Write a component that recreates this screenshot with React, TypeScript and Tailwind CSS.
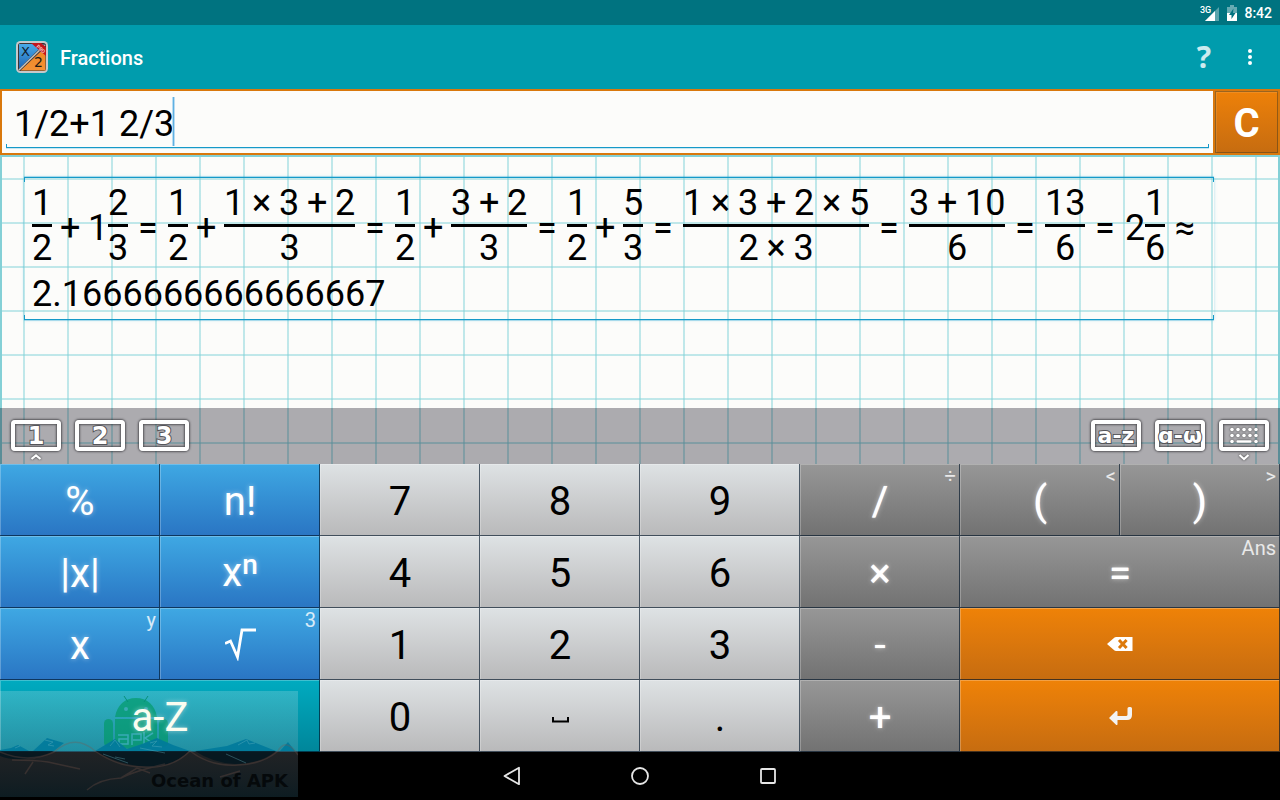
import type { ReactNode } from 'react';

const TONES = {
  blue: 'bg-linear-to-b from-[#3fa8e3] to-[#2a75c3] text-white [text-shadow:0_0_5px_rgba(255,255,255,0.5)]',
  light: 'bg-linear-to-b from-[#dee2e4] to-[#b9b9ba] text-black',
  gray: 'bg-linear-to-b from-[#979797] to-[#727272] text-white [text-shadow:0_0_1px_#fff,0_0_5px_rgba(255,255,255,0.5)]',
  orange: 'bg-linear-to-b from-[#ef8207] to-[#c66c10] text-white',
  teal: 'bg-linear-to-b from-[#00abc0] to-[#00869a] text-[#fbfdf0] [text-shadow:0_0_5px_rgba(255,255,255,0.5)]',
};

type KeyDef = {
  name: string;
  tone: keyof typeof TONES;
  label: ReactNode;
  corner?: string;
  wide?: boolean;
};

const BackspaceIcon = () => (
  <svg width="26" height="14" viewBox="0 0 26 14" aria-hidden="true">
    <path d="M0 7 7.500.4Q8 0 9 0H25.500V14H9Q8 14 7.500 13.600Z" fill="#fff" />
    <path d="m12 3 7.600 8M19.600 3 12 11" stroke="#dd790a" strokeWidth="3" />
  </svg>
);

const EnterIcon = () => (
  <svg width="23" height="18" viewBox="0 0 23 18" aria-hidden="true">
    <path d="M0 11 7 4Q8.500 3.500 8.500 5V9H17Q18.500 9 18.500 7.500V1.500Q18.500 0 20 0H21.500Q23 0 23 1.500V8Q23 13 18 13H8.500V17Q8.500 18.500 7 17.800Z" fill="#f3f3f3" />
  </svg>
);

const SpaceIcon = () => (
  <svg className="mt-2" width="17" height="6" viewBox="0 0 17 6" aria-hidden="true">
    <path d="M1 0V4.500H16V0" fill="none" stroke="#000" strokeWidth="2" />
  </svg>
);

const RootIcon = () => (
  <svg width="31" height="33" viewBox="0 0 31 33" aria-hidden="true">
    <path d="M0 15.500 5.500 13 12.500 29 17 2H31" fill="none" stroke="#fff" strokeWidth="2.800" />
  </svg>
);

const KEYS: KeyDef[] = [
  { name: 'percent', tone: 'blue', label: '%' },
  { name: 'factorial', tone: 'blue', label: 'n!' },
  { name: '7', tone: 'light', label: '7' },
  { name: '8', tone: 'light', label: '8' },
  { name: '9', tone: 'light', label: '9' },
  { name: 'divide', tone: 'gray', label: '/', corner: '÷' },
  { name: 'open parenthesis', tone: 'gray', label: '(', corner: '<' },
  { name: 'close parenthesis', tone: 'gray', label: ')', corner: '>' },
  { name: 'absolute value', tone: 'blue', label: '|x|' },
  {
    name: 'power',
    tone: 'blue',
    label: (
      <>
        x<sup className="-top-3 text-[28px] font-medium">n</sup>
      </>
    ),
  },
  { name: '4', tone: 'light', label: '4' },
  { name: '5', tone: 'light', label: '5' },
  { name: '6', tone: 'light', label: '6' },
  { name: 'multiply', tone: 'gray', label: '×' },
  { name: 'equals', tone: 'gray', label: '=', corner: 'Ans', wide: true },
  { name: 'x', tone: 'blue', label: 'x', corner: 'y' },
  { name: 'square root', tone: 'blue', label: <RootIcon />, corner: '3' },
  { name: '1', tone: 'light', label: '1' },
  { name: '2', tone: 'light', label: '2' },
  { name: '3', tone: 'light', label: '3' },
  { name: 'minus', tone: 'gray', label: '-' },
  { name: 'backspace', tone: 'orange', label: <BackspaceIcon />, wide: true },
  { name: 'letters', tone: 'teal', label: 'a-Z', wide: true },
  { name: '0', tone: 'light', label: '0' },
  { name: 'space', tone: 'light', label: <SpaceIcon /> },
  { name: 'decimal point', tone: 'light', label: '.' },
  { name: 'plus', tone: 'gray', label: '+' },
  { name: 'enter', tone: 'orange', label: <EnterIcon />, wide: true },
];

function Key({ name, tone, label, corner, wide }: KeyDef) {
  return (
    <button
      type="button"
      aria-label={name}
      className={`relative flex h-[72px] items-center justify-center text-[40px] leading-[47px] shadow-[inset_-1px_-1px_0_rgba(0,20,40,0.65),inset_1px_1px_0_rgba(255,255,255,0.25)] ${TONES[tone]} ${wide ? 'col-span-2' : ''}`}
    >
      <span className={`relative z-10 whitespace-nowrap ${typeof label === 'string' ? 'pt-[3px]' : ''}`}>{label}</span>
      {corner && (
        <span className="absolute top-0 right-1 text-xl leading-6 text-white/80 [text-shadow:none]">{corner}</span>
      )}
    </button>
  );
}

/** Splits "1 × 3 + 2" into tokens and sets digits and operators in evenly spaced slots. */
function Terms({ text }: { text: string }) {
  return (
    <span className="flex justify-center gap-2">
      {text.split(' ').map((t, i) => (
        <span key={i} className={`text-center ${t.length > 1 ? 'w-10' : t === '×' ? 'w-[19px]' : 'w-5'}`}>
          {t}
        </span>
      ))}
    </span>
  );
}

function Frac({ top, bottom, whole }: { top: string; bottom: string; whole?: string }) {
  return (
    <span className="flex items-center">
      {whole && <span className="w-5 pt-1">{whole}</span>}
      <span className="flex flex-col">
        <Terms text={top} />
        <span className="h-[3px] bg-black" />
        <Terms text={bottom} />
      </span>
    </span>
  );
}

const Op = ({ children }: { children: string }) => (
  <span className={`pt-1 text-center ${children === '+' ? 'w-5' : 'w-6'}`}>{children}</span>
);

const TAB = 'relative flex h-[31px] w-[50px] items-center justify-center rounded-[4px] border-4 border-white shadow-[0_0_2px_1px_rgba(40,40,45,0.65),inset_0_0_2px_1px_rgba(40,40,45,0.65)]';
const TAB_TEXT = "font-['DejaVu_Sans','Noto_Sans',sans-serif] leading-6 font-bold whitespace-nowrap text-white [-webkit-text-stroke:2px_#55555a] [paint-order:stroke_fill]";

function Chevron({ down }: { down?: boolean }) {
  return (
    <svg className="absolute top-[29px] left-[15px] drop-shadow-[0_0_1px_#333]" width="12" height="8" viewBox="0 0 12 8" aria-hidden="true">
      <path d={down ? 'M1.500 2 6 6 10.500 2' : 'M1.500 6 6 2.500 10.500 6'} fill="none" stroke="#fff" strokeWidth="2.200" />
    </svg>
  );
}

function Watermark() {
  return (
    <div className="pointer-events-none absolute bottom-[3px] left-0 h-[106px] w-[298px] bg-linear-to-b from-[rgba(235,240,240,0.2)] via-[rgba(190,190,200,0.19)] to-[rgba(70,150,180,0.19)]">
      <svg className="absolute inset-0" width="298" height="106" viewBox="0 0 298 106" aria-hidden="true">
        <g fill="#009a64" opacity="0.65">
          <path d="M115 26C117 14 125 7 136 7S155 14 157 26Z" />
          <rect x="104" y="28" width="9" height="28" rx="4.500" />
          <rect x="159" y="28" width="9" height="28" rx="4.500" />
          <path d="M115 28H157V54L135 60 115 54Z" />
        </g>
        <path d="m124 5 4 6M148 5l-4 6" stroke="#06917a" />
        <circle cx="126" cy="18" r="2" fill="#38abb5" />
        <circle cx="146" cy="18" r="2" fill="#38abb5" />
        <path d="M118 44H128V53H119V48H128M132 54V43H141V49H133M144 41V53M153 42 145 47 154 53" fill="none" stroke="#38abb5" strokeWidth="1.500" />
        <g fill="#007a9c" opacity="0.9">
          <path d="M0 59 11 57 18 54 29 60H0Z" />
          <path d="M33 60 47 47 64 52 54 60Z" />
          <path d="M95 60 115 48 127 58 142 53 157 47 173 54 190 60Z" />
          <path d="M195 60 227 55 246 48 276 60Z" />
          <path d="M280 60 288 51 295 60Z" />
        </g>
        <g fill="#00151f" opacity="0.75">
          <path d="M0 60H54Q42 67 25 68 10 69 0 65Z" />
          <path d="M95 60H189Q173 76 147 76 119 74 95 60Z" />
          <path d="M195 60H276Q260 73 235 73 213 72 195 60Z" />
        </g>
        <g fill="none" stroke="#6fbac7" opacity="0.35">
          <path d="m45 49 8 2-5 3 6 1M15 57l5-2M150 52l7-2-5 5 10 1M238 54l9-5 2 4 6-1M110 55l5-6 5 7" />
          <path d="m103 63 25 9M115 66l10 2M140 57l25 5M226 63l20 9" />
        </g>
        <g fill="none" stroke="#7c564b" strokeWidth="1.500" opacity="0.3">
          <path d="M0 61Q28 73 54 61 75 42 95 60 119 77 147 76 173 77 190 60 211 76 238 74 263 73 278 60 286 46 298 64" />
          <path d="M12 69Q35 69 48 71L80 78M33 71 25 83M87 99Q99 88 121 87 135 80 165 73M121 87l16-10 13 5M220 86l20-6" />
        </g>
      </svg>
      <span className="absolute right-[10px] bottom-1 font-['DejaVu_Sans',sans-serif] text-[18px] leading-6 font-bold text-[#05090b]">Ocean of APK</span>
    </div>
  );
}

export default function App() {
  return (
    <div className="relative flex min-h-screen flex-col bg-black font-['Roboto','Liberation_Sans',sans-serif]">
      <div className="flex h-[25px] items-center justify-end bg-[#007380] pt-px pr-2 text-white">
        <svg width="19" height="18" viewBox="0 0 19 18" aria-hidden="true">
          <path d="M19 3V17H5Z" fill="#fff" opacity="0.35" />
          <path d="M15 7V17H5Z" fill="#fff" />
          <text x="0" y="9" fill="#fff" fontSize="9" fontWeight="500">3G</text>
        </svg>
        <svg className="ml-2" width="10" height="16" viewBox="0 0 10 16" aria-hidden="true">
          <path d="M3 0H7V2H10V16H0V2H3Z" fill="#fff" opacity="0.4" />
          <path d="M0 8H10V16H0Z" fill="#fff" />
          <path d="M6.500 3.500 2 10H4.500V14L8.500 8H6Z" fill="#007380" />
        </svg>
        <time className="ml-[7px] text-[14px] leading-5 font-medium">8:42</time>
      </div>

      <header className="flex h-16 items-center bg-[#009cad] pl-4">
        <svg width="32" height="32" viewBox="0 0 32 32" aria-hidden="true">
          <defs>
            <linearGradient id="tileBlue" x2="0" y2="1">
              <stop stopColor="#49aae8" />
              <stop offset="1" stopColor="#1f66b5" />
            </linearGradient>
            <linearGradient id="tileOrange" x2="0" y2="1">
              <stop stopColor="#ee8420" />
              <stop offset="1" stopColor="#f39236" />
            </linearGradient>
          </defs>
          <rect width="32" height="32" rx="4.500" fill="#c6c9cc" />
          <rect x="2" y="2" width="28" height="28" rx="2.500" fill="#3d3434" />
          <path d="M3 3H28L3 28Z" fill="url(#tileBlue)" />
          <path d="M29.500 6V29.500H4.500Z" fill="url(#tileOrange)" />
          <path d="M3 29 29 4" stroke="#c9c3bb" strokeWidth="1.500" />
          <path d="M15 2H25L30 6V15Z" fill="#c3141c" />
          <text x="5" y="15" fontSize="13" fill="#10202e" fontFamily="DejaVu Sans">X</text>
          <text x="18" y="26" fontSize="14" fill="#221a14" fontFamily="DejaVu Sans">2</text>
          <text x="20" y="6" fontSize="5" fontWeight="700" fill="#f3c4c4" transform="rotate(42 20 6)">PRO</text>
        </svg>
        <h1 className="ml-3 pt-0.5 text-xl leading-6 font-medium text-white">Fractions</h1>
        <button type="button" aria-label="Help" className="ml-auto flex h-12 w-12 items-center justify-center font-['Noto_Sans',sans-serif] text-[30px] leading-10 font-bold text-white/80">
          ?
        </button>
        <button type="button" aria-label="More options" className="mr-[14px] ml-[6px] flex h-12 w-8 items-center justify-center">
          <svg width="4" height="16" viewBox="0 0 4 16" aria-hidden="true" fill="#fff">
            <circle cx="2" cy="2" r="2" />
            <circle cx="2" cy="8" r="2" />
            <circle cx="2" cy="14" r="2" />
          </svg>
        </button>
      </header>

      <div className="flex h-[66px] border-2 border-[#d9780c] bg-[#d9780c]">
        <div className="relative flex flex-1 bg-[#fcfcfa] px-1">
          <input
            type="text"
            aria-label="Expression"
            defaultValue="1/2+1 2/3"
            className="w-full bg-transparent pt-1 pl-2 text-[36px] leading-[42px] text-black outline-none"
          />
          <span className="absolute top-[6px] left-[170px] h-[49px] w-[3px] border-x border-[#b9dcf2] bg-[#5fb1e2]" />
          <span className="absolute inset-x-1 bottom-[5px] h-1 border-x border-b border-[#1599c8] shadow-[0_1px_0_#c8e6f1]" />
        </div>
        <button
          type="button"
          aria-label="Clear"
          className="ml-[2px] w-[63px] bg-linear-to-b from-[#ee8108] to-[#c66c10] pt-0.5 text-[40px] leading-[47px] font-bold text-white shadow-[inset_0_0_0_1px_rgba(70,60,30,0.5),inset_1px_1px_0_1px_rgba(255,255,255,0.1)]"
        >
          C
        </button>
      </div>

      <main className="flex flex-1 flex-col bg-[#fcfcfa] bg-[linear-gradient(rgba(130,210,216,0.5)_2px,transparent_2px),linear-gradient(90deg,rgba(130,210,216,0.5)_2px,transparent_2px)] bg-[length:44px_44px] bg-[position:23px_23px] shadow-[inset_2px_2px_0_#84d0d6,inset_-2px_0_0_#84d0d6]">
        <output className="relative mt-[22px] mr-[66px] ml-6 block border-y border-[#1599c8] pt-1 pb-1 pl-2 text-[36px] leading-[42px] text-black shadow-[0_0_3px_rgba(40,170,215,0.35),0_-1px_0_rgba(40,170,215,0.3),0_1px_0_rgba(40,170,215,0.3)] before:absolute before:inset-x-0 before:top-0 before:h-1 before:border-x before:border-[#1599c8] after:absolute after:inset-x-0 after:bottom-0 after:h-1 after:border-x after:border-[#1599c8]">
          <span className="flex items-center gap-2">
            <Frac top="1" bottom="2" />
            <Op>+</Op>
            <Frac whole="1" top="2" bottom="3" />
            <Op>=</Op>
            <Frac top="1" bottom="2" />
            <Op>+</Op>
            <Frac top="1 × 3 + 2" bottom="3" />
            <Op>=</Op>
            <Frac top="1" bottom="2" />
            <Op>+</Op>
            <Frac top="3 + 2" bottom="3" />
            <Op>=</Op>
            <Frac top="1" bottom="2" />
            <Op>+</Op>
            <Frac top="5" bottom="3" />
            <Op>=</Op>
            <Frac top="1 × 3 + 2 × 5" bottom="2 × 3" />
            <Op>=</Op>
            <Frac top="3 + 10" bottom="6" />
            <Op>=</Op>
            <Frac top="13" bottom="6" />
            <Op>=</Op>
            <Frac whole="2" top="1" bottom="6" />
            <Op>≈</Op>
          </span>
          <span className="mt-1 block">2.1666666666666667</span>
        </output>

        <nav aria-label="Keyboards" className="mt-auto flex h-14 items-start gap-[14px] bg-[rgba(4,0,20,0.32)] px-[11px] pt-3">
          <button type="button" className={TAB}>
            <span className={`text-[24px] ${TAB_TEXT}`}>1</span>
            <Chevron />
          </button>
          <button type="button" className={TAB}>
            <span className={`text-[24px] ${TAB_TEXT}`}>2</span>
          </button>
          <button type="button" className={TAB}>
            <span className={`text-[24px] ${TAB_TEXT}`}>3</span>
          </button>
          <button type="button" className={`ml-auto ${TAB}`}>
            <span className={`text-[22px] ${TAB_TEXT}`}>a-z</span>
          </button>
          <button type="button" className={TAB}>
            <span className={`text-[22px] ${TAB_TEXT}`}>ɑ-ω</span>
          </button>
          <button type="button" aria-label="Hide keyboard" className={TAB}>
            <svg className="drop-shadow-[0_0_1px_#333]" width="30" height="17" viewBox="0 0 30 17" aria-hidden="true" fill="#fff">
              {[3, 9, 15, 21, 27].map((x) => (
                <g key={x}>
                  <circle cx={x} cy="2.500" r="1.800" />
                  <circle cx={x} cy="8.500" r="1.800" />
                </g>
              ))}
              <circle cx="3" cy="14.500" r="1.800" />
              <rect x="7.500" y="13.200" width="15" height="2.600" rx="1" />
              <circle cx="27" cy="14.500" r="1.800" />
            </svg>
            <Chevron down />
          </button>
        </nav>
      </main>

      <section aria-label="Keypad" className="grid grid-cols-8">
        {KEYS.map((k) => (
          <Key key={k.name} {...k} />
        ))}
      </section>

      <footer className="flex h-12 items-stretch justify-center bg-black">
        <button type="button" aria-label="Back" className="flex w-32 items-center justify-center">
          <svg width="18" height="20" viewBox="0 0 18 20" aria-hidden="true">
            <path d="M1.500 10 16 1.800V18.200Z" fill="none" stroke="#e6e6e6" strokeWidth="1.800" strokeLinejoin="round" />
          </svg>
        </button>
        <button type="button" aria-label="Home" className="flex w-32 items-center justify-center">
          <svg width="18" height="18" viewBox="0 0 18 18" aria-hidden="true">
            <circle cx="9" cy="9" r="8" fill="none" stroke="#e6e6e6" strokeWidth="1.800" />
          </svg>
        </button>
        <button type="button" aria-label="Recent apps" className="flex w-32 items-center justify-center">
          <svg width="16" height="16" viewBox="0 0 16 16" aria-hidden="true">
            <rect x="1" y="1" width="14" height="14" rx="1" fill="none" stroke="#e6e6e6" strokeWidth="1.800" />
          </svg>
        </button>
      </footer>

      <Watermark />
    </div>
  );
}
